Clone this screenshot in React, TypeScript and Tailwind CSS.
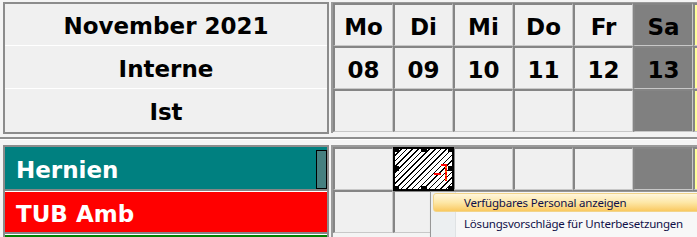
import React from "react";

const days = ["Mo", "Di", "Mi", "Do", "Fr", "Sa"];
const nums = ["08", "09", "10", "11", "12", "13"];

const cellBase =
  "shrink-0 border-l-2 border-t-2 border-r border-b border-l-[#858585] border-t-[#858585] border-r-[#c8c8c8] border-b-[#c8c8c8]";

function Cell({ children, grey }: { children?: React.ReactNode; grey?: boolean }) {
  return (
    <div
      className={`${cellBase} w-[60px] h-full flex items-center justify-center pt-[4px] ${
        grey ? "bg-[#808080]" : "bg-[#f0f0f0]"
      }`}
    >
      {children}
    </div>
  );
}

function YellowCell() {
  return <div className={`${cellBase} w-[10px] h-full bg-[#ffff99]`} />;
}

function HeaderRow({ items, h }: { items?: string[]; h: string }) {
  return (
    <div className={`flex ${h}`}>
      {days.map((d, i) => (
        <Cell key={d} grey={i === 5}>
          {items ? items[i] : null}
        </Cell>
      ))}
      <YellowCell />
    </div>
  );
}

function Handle({ cls }: { cls: string }) {
  return <div className={`absolute w-[6px] h-[5px] bg-black ${cls}`} />;
}

function HatchedCell() {
  return (
    <div className="relative shrink-0 w-[60px] h-full">
      <div className="absolute left-0 top-0 w-[61px] h-[44px] border-2 border-black bg-[repeating-linear-gradient(135deg,#000_0px,#000_1px,#fff_1px,#fff_4px)]">
        <Handle cls="-left-[2px] -top-[2px]" />
        <Handle cls="left-[26px] -top-[2px]" />
        <Handle cls="-right-[2px] -top-[2px]" />
        <Handle cls="-left-[2px] top-[17px]" />
        <Handle cls="-right-[2px] top-[17px]" />
        <Handle cls="-left-[2px] -bottom-[2px]" />
        <Handle cls="left-[26px] -bottom-[2px]" />
        <Handle cls="-right-[2px] -bottom-[2px]" />
        <svg className="absolute left-[38px] top-[14px]" width="16" height="20" viewBox="0 0 16 20">
          <line x1="8" y1="2" x2="14" y2="2" stroke="#ff0000" strokeWidth="2" />
          <line x1="13" y1="1" x2="13" y2="18" stroke="#ff0000" strokeWidth="2" strokeDasharray="3 1" />
          <line x1="13" y1="4" x2="13" y2="18" stroke="#ff8a00" strokeWidth="2" strokeDasharray="1 3" />
          <line x1="1" y1="11" x2="8" y2="11" stroke="#ff0000" strokeWidth="2" />
        </svg>
      </div>
    </div>
  );
}

export default function App() {
  return (
    <div
      className="relative w-[697px] h-[237px] overflow-hidden bg-[#f4f4f4] text-black"
      style={{ fontFamily: '"DejaVu Sans", sans-serif' }}
    >
      {/* top section */}
      <div className="flex h-[134px] pt-[2px] gap-[2px]">
        <div className="shrink-0 ml-[3px] w-[326px] h-[132px] border-2 border-[#8c8c8c] bg-[#f0f0f0] flex flex-col text-[23px] font-bold leading-none">
          <div className="h-[42px] border-b border-b-white flex items-center justify-center pt-[4px]">November 2021</div>
          <div className="h-[43px] border-b border-b-white flex items-center justify-center pt-[4px]">Interne</div>
          <div className="flex-1 flex items-center justify-center pt-[4px]">Ist</div>
        </div>
        <div className="flex-1 min-w-0 overflow-hidden h-[131px] border-l-2 border-t border-[#9a9a9a] flex flex-col text-[23px] font-bold leading-none">
          <HeaderRow items={days} h="h-[43px]" />
          <HeaderRow items={nums} h="h-[43px]" />
          <HeaderRow h="h-[43px]" />
        </div>
      </div>

      {/* splitter */}
      <div className="h-[11px] pt-[3px]">
        <div className="h-[3px] border-t-2 border-t-[#8f8f8f] border-b border-b-white" />
      </div>

      {/* bottom section */}
      <div className="flex gap-[2px]">
        <div className="shrink-0 ml-[3px] w-[326px] border-l-2 border-t-2 border-r-2 border-[#8c8c8c] flex flex-col text-[23px] font-bold leading-none text-white">
          <div className="h-[42px] bg-[#008080] flex items-stretch justify-between">
            <div className="pl-[11px] flex items-center pt-[5px]">Hernien</div>
            <div className="mt-[3px] w-[11px] bg-[#468080] border border-black" />
          </div>
          <div className="h-[3px] border-t-2 border-t-[#858585] border-b border-b-white" />
          <div className="h-[40px] bg-[#ff0000] flex items-center pl-[11px] pt-[5px]">TUB Amb</div>
          <div className="h-[3px] border-t-2 border-t-[#858585] border-b border-b-white" />
          <div className="h-[3px] bg-[#008000]" />
        </div>
        <div className="flex-1 min-w-0 overflow-hidden border-l-2 border-t-2 border-[#9a9a9a] flex flex-col">
          <div className="flex h-[43px]">
            <Cell />
            <HatchedCell />
            <Cell />
            <Cell />
            <Cell />
            <Cell grey />
            <YellowCell />
          </div>
          <div className="flex h-[43px]">
            <Cell />
            <Cell />
            <Cell />
            <Cell />
            <Cell />
            <Cell grey />
            <YellowCell />
          </div>
        </div>
      </div>

      {/* context menu */}
      <div
        className="absolute left-[430px] top-[191px] w-[300px] h-[60px] border-l border-t border-[#979797] bg-[#f7f7f7] text-[11.5px] tracking-[-0.2px] text-[#101048] shadow-[2px_2px_3px_rgba(0,0,0,0.3)]"
        style={{ fontFamily: '"Noto Sans", "Open Sans", sans-serif' }}
      >
        <div className="absolute left-0 top-0 w-[25px] h-full bg-[#eceff1] border-r border-r-[#dfe2e4]" />
        <div className="relative pt-[1px] pl-[2px]">
          <div className="h-[19px] rounded-[3px] border border-[#f2d48a] bg-gradient-to-b from-[#fff6dc] via-[#fde7a6] to-[#f9c95f] flex items-center pl-[30px]">
            Verfügbares Personal anzeigen
          </div>
          <div className="h-[24px] flex items-center pl-[31px]">Lösungsvorschläge für Unterbesetzungen</div>
        </div>
      </div>
    </div>
  );
}
